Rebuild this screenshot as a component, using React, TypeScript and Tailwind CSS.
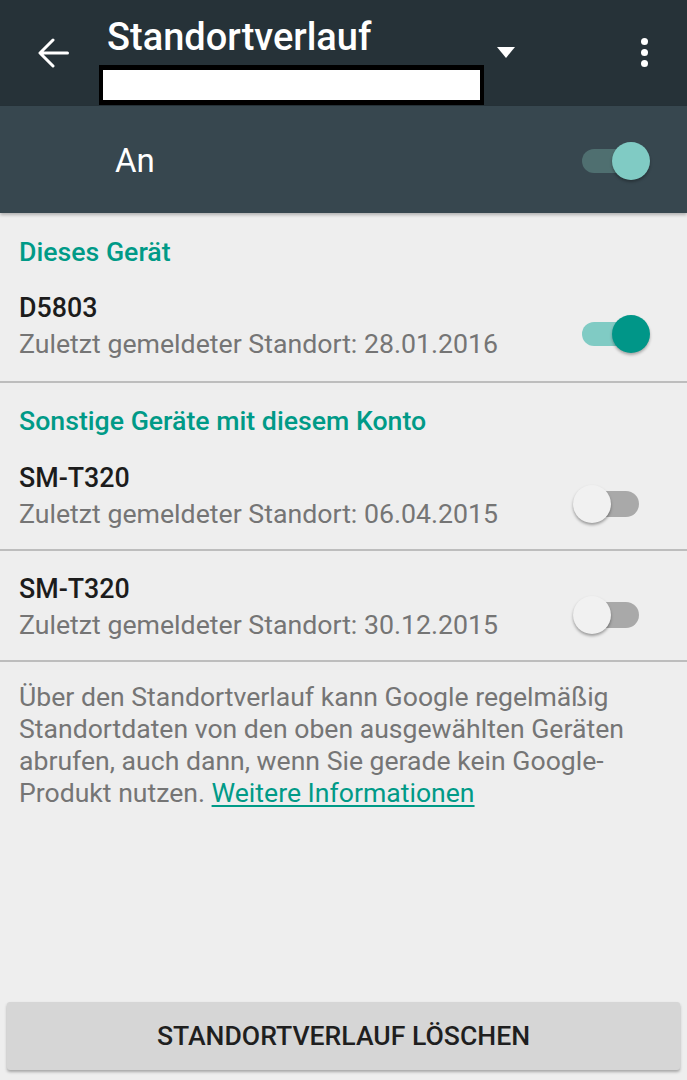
import React from "react";

function Toggle({ on, dark = false }: { on: boolean; dark?: boolean }) {
  if (on) {
    return (
      <div className="relative h-[38px] w-[68px]">
        <div
          className={`absolute left-0 top-[7px] h-[24px] w-[56px] rounded-full ${
            dark ? "bg-[#4f6f70]" : "bg-[#80cbc4]"
          }`}
        />
        <div
          className={`absolute right-0 top-0 h-[38px] w-[38px] rounded-full shadow-[0_2px_3px_rgba(0,0,0,0.3)] ${
            dark ? "bg-[#80cbc4]" : "bg-[#009688]"
          }`}
        />
      </div>
    );
  }
  return (
    <div className="relative mr-[11px] h-[38px] w-[66px]">
      <div className="absolute right-0 top-[6px] h-[26px] w-[50px] rounded-full bg-[#a9a9a9]" />
      <div className="absolute left-0 top-0 h-[38px] w-[38px] rounded-full bg-[#f1f1f1] shadow-[0_2px_3px_rgba(0,0,0,0.35)]" />
    </div>
  );
}

function DeviceRow({ name, date, on }: { name: string; date: string; on: boolean }) {
  return (
    <div className="flex items-center justify-between pl-[19px] pr-[37px]">
      <div>
        <div className="text-[26.8px] font-medium leading-[32px] text-[#1c1c1c]">{name}</div>
        <div className="mt-[4px] text-[26.7px] leading-[32px] text-[#757575]">
          Zuletzt gemeldeter Standort: {date}
        </div>
      </div>
      <div className="mt-[16px]">
        <Toggle on={on} />
      </div>
    </div>
  );
}

export default function App() {
  return (
    <div
      className="flex h-[1080px] w-[687px] flex-col bg-[#eeeeee]"
      style={{ fontFamily: "Roboto, 'Liberation Sans', sans-serif" }}
    >
      {/* Toolbar */}
      <div className="flex h-[106px] items-start bg-[#263238]">
        <div className="w-[99px] pl-[38px] pt-[38px]">
          <svg width="31" height="30" viewBox="0 0 31 30" fill="none">
            <path
              d="M29.5 15H2.5M15 2L2 15l13 13"
              stroke="white"
              strokeWidth="3"
              strokeLinecap="round"
              strokeLinejoin="round"
            />
          </svg>
        </div>
        <div className="flex w-[385px] flex-col pt-[15px]">
          <div className="pl-[8px] text-[38px] font-medium leading-[44px] text-white">
            Standortverlauf
          </div>
          <div className="mt-[6px] h-[40px] border-x-[4px] border-y-[5px] border-black bg-white" />
        </div>
        <div className="ml-[13px] pt-[47px]">
          <svg width="18" height="11" viewBox="0 0 18 11">
            <path d="M0 0h18L9 11z" fill="white" />
          </svg>
        </div>
        <div className="flex-1" />
        <div className="flex flex-col items-center gap-[4px] pr-[39px] pt-[38px]">
          <span className="h-[7px] w-[7px] rounded-full bg-white" />
          <span className="h-[7px] w-[7px] rounded-full bg-white" />
          <span className="h-[7px] w-[7px] rounded-full bg-white" />
        </div>
      </div>

      {/* Master switch */}
      <div className="flex h-[107px] items-center justify-between bg-[#37474f] pl-[115px] pr-[37px] shadow-[0_2px_3px_rgba(0,0,0,0.25)]">
        <span className="mt-[2px] text-[33px] leading-[40px] text-white">An</span>
        <div className="mt-[3px]">
          <Toggle on dark />
        </div>
      </div>

      {/* This device */}
      <div className="pt-[23px] pb-[21px]">
        <div className="pl-[19px] text-[26.7px] font-medium leading-[32px] text-[#009a87]">
          Dieses Gerät
        </div>
        <div className="mt-[24px]">
          <DeviceRow name="D5803" date="28.01.2016" on />
        </div>
      </div>
      <div className="h-[2px] bg-[#bdbdbd]" />

      {/* Other devices */}
      <div className="pt-[22px] pb-[19px]">
        <div className="pl-[19px] text-[26.7px] font-medium leading-[32px] text-[#009a87]">
          Sonstige Geräte mit diesem Konto
        </div>
        <div className="mt-[25px]">
          <DeviceRow name="SM-T320" date="06.04.2015" on={false} />
        </div>
      </div>
      <div className="h-[2px] bg-[#bdbdbd]" />
      <div className="pt-[22px] pb-[19px]">
        <DeviceRow name="SM-T320" date="30.12.2015" on={false} />
      </div>
      <div className="h-[2px] bg-[#bdbdbd]" />

      {/* Info text */}
      <p className="px-[19px] pt-[19px] text-[26.6px] leading-[32px] text-[#757575]">
        Über den Standortverlauf kann Google regelmäßig Standortdaten von den oben ausgewählten
        Geräten abrufen, auch dann, wenn Sie gerade kein Google-Produkt nutzen.{" "}
        <a className="text-[#009a87] underline decoration-[2px] underline-offset-[3px]">
          Weitere Informationen
        </a>
      </p>

      <div className="flex-1" />

      {/* Delete button */}
      <div className="px-[7px] pb-[10px]">
        <div className="flex h-[68px] items-center justify-center rounded-[3px] bg-[#d6d6d6] shadow-[0_2px_3px_rgba(0,0,0,0.3)]">
          <span className="text-[26.6px] font-medium text-[#1f1f1f]">STANDORTVERLAUF LÖSCHEN</span>
        </div>
      </div>
    </div>
  );
}
